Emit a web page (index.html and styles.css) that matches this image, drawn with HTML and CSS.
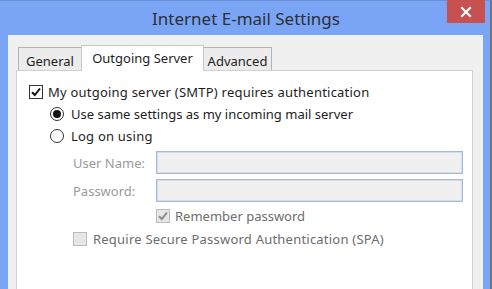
FILE: index.html
```html
<!DOCTYPE html>
<html>
<head>
<meta charset="utf-8">
<link rel="stylesheet" href="styles.css">
</head>
<body>
<div class="window">
  <div class="titlebar">
    <div class="title">Internet E-mail Settings</div>
    <div class="close"><svg width="12" height="12" viewBox="0 0 12 12"><path d="M2 2 L10 10 M10 2 L2 10" stroke="#fff" stroke-width="2.2" stroke-linecap="square"/></svg></div>
  </div>
  <div class="client">
    <div class="tabs">
      <div class="tab">General</div>
      <div class="tab active">Outgoing Server</div>
      <div class="tab">Advanced</div>
    </div>
    <div class="panel">
      <div class="row">
        <span class="check checked"><svg width="12" height="12" viewBox="0 0 12 12"><path d="M2 6.2 L4.8 9 L10 2.5" fill="none" stroke="#111" stroke-width="2"/></svg></span>
        <span class="label wide">My outgoing server (SMTP) requires authentication</span>
      </div>
      <div class="row indent">
        <span class="radio on"></span>
        <span class="label">Use same settings as my incoming mail server</span>
      </div>
      <div class="row indent">
        <span class="radio"></span>
        <span class="label wide">Log on using</span>
      </div>
      <div class="field first">
        <span class="flabel">User Name:</span>
        <span class="input"></span>
      </div>
      <div class="field">
        <span class="flabel">Password:</span>
        <span class="input"></span>
      </div>
      <div class="row remember">
        <span class="check disabled"><svg width="12" height="12" viewBox="0 0 12 12"><path d="M2 6.2 L4.8 9 L10 2.5" fill="none" stroke="#8a8a8a" stroke-width="2"/></svg></span>
        <span class="label dim">Remember password</span>
      </div>
      <div class="row spa">
        <span class="check disabled"></span>
        <span class="label dim wide">Require Secure Password Authentication (SPA)</span>
      </div>
    </div>
  </div>
</div>
</body>
</html>
```
FILE: styles.css
```css
* { box-sizing: border-box; }
html, body { margin: 0; padding: 0; }
body {
  width: 492px;
  height: 289px;
  overflow: hidden;
  font-family: "Noto Sans", "Open Sans", sans-serif;
  background: #7aa5f5;
}
.window {
  width: 492px;
  height: 289px;
  background: #7aa5f5;
  border-top: 1px solid #6a8fd6;
  border-right: 2px solid #6d7480;
  display: flex;
  flex-direction: column;
}
.titlebar {
  position: relative;
  height: 34px;
  flex: none;
  display: flex;
  align-items: center;
  justify-content: center;
}
.title {
  font-size: 17px;
  color: #2c2f36;
  padding-left: 2px;
  padding-top: 1px;
}
.close {
  position: absolute;
  right: 5px;
  top: -1px;
  width: 38px;
  height: 23px;
  background: #c75050;
  display: flex;
  align-items: center;
  justify-content: center;
}
.close svg { display: block; }
.client {
  flex: 1;
  margin: 0 7px 0 8px;
  background: #f0f0f0;
  padding: 10px 10px 0 8px;
  display: flex;
  flex-direction: column;
  min-height: 0;
}
.tabs {
  display: flex;
  align-items: flex-end;
  padding-left: 2px;
  height: 25px;
  position: relative;
  z-index: 1;
}
.tab {
  height: 23px;
  border: 1px solid #b4b4b4;
  border-bottom: none;
  background: #ececec;
  font-size: 13px;
  color: #1e1e1e;
  display: flex;
  align-items: center;
  justify-content: center;
  padding-top: 3px;
}
.tab:first-child { width: 63px; border-right: none; }
.tab:last-child { width: 68px; border-left: none; }
.tab.active {
  width: 123px;
  height: 26px;
  background: #ffffff;
  margin-bottom: -1px;
  border-color: #c8c8c8;
  padding-top: 0;
  padding-bottom: 1px;
}
.panel {
  flex: 1;
  background: #ffffff;
  border: 1px solid #d0d0d0;
  border-bottom: none;
  padding: 10px 0 0 12px;
}
.row {
  height: 22px;
  display: flex;
  align-items: center;
}
.row.indent { padding-left: 21px; }
.label {
  font-size: 13px;
  color: #1e1e1e;
  white-space: nowrap;
}
.label.wide { letter-spacing: 0.22px; }
.label.dim { color: #6d6d6d; }
.check {
  width: 14px;
  height: 14px;
  border: 1px solid #333333;
  background: #ffffff;
  margin-right: 5px;
  display: flex;
  align-items: center;
  justify-content: center;
  flex: none;
}
.check.disabled {
  border-color: #bcbcbc;
  background: #e6e6e6;
}
.radio {
  width: 14px;
  height: 14px;
  border: 1px solid #333333;
  border-radius: 50%;
  background: #ffffff;
  margin-right: 7px;
  flex: none;
  display: flex;
  align-items: center;
  justify-content: center;
}
.radio.on::after {
  content: "";
  width: 8px;
  height: 8px;
  border-radius: 50%;
  background: #111111;
}
.field {
  display: flex;
  align-items: center;
  margin-top: 5px;
  padding-left: 44px;
}
.field.first { margin-top: 4px; }
.flabel {
  width: 83px;
  font-size: 13px;
  color: #9a9a9a;
  white-space: nowrap;
}
.input {
  width: 307px;
  height: 23px;
  border: 1px solid #a9b8d2;
  box-shadow: inset 0 0 0 1px #d5dcea;
  background: #f0f0f0;
}
.row.remember { padding-left: 127px; margin-top: 3px; }
.row.spa { padding-left: 44px; margin-top: 1px; }
.row.spa .check { margin-right: 6px; }
```
